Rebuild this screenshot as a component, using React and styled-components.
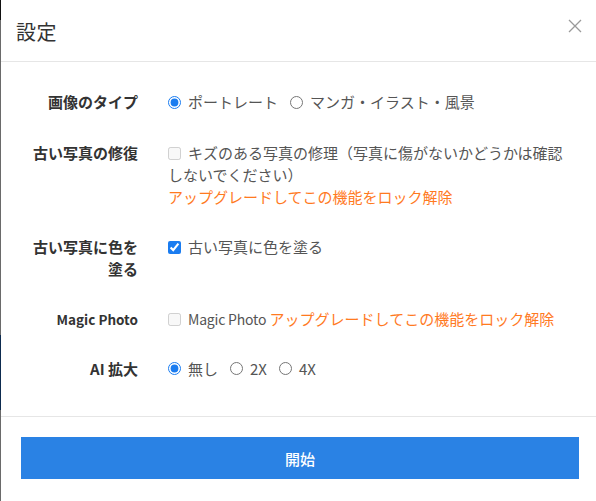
import React, { useState } from "react";
import styled, { createGlobalStyle } from "styled-components";

const GlobalStyle = createGlobalStyle`
  html, body {
    margin: 0;
    padding: 0;
    background: #ffffff;
  }
  body {
    font-family: "Noto Sans CJK JP", "Noto Sans", sans-serif;
    -webkit-font-smoothing: antialiased;
  }
  * { box-sizing: border-box; }
`;

const Screen = styled.div`
  display: flex;
  width: 596px;
  height: 501px;
  overflow: hidden;
`;

/* sliver of the dimmed page behind the dialog */
const Backdrop = styled.div`
  flex: 0 0 1px;
  background: linear-gradient(
    to bottom,
    #111 0px,
    #111 20px,
    #6a6a6a 20px,
    #6a6a6a 335px,
    #0d2b4f 335px,
    #0d2b4f 410px,
    #6a6a6a 410px
  );
`;

const Dialog = styled.section`
  flex: 1;
  display: flex;
  flex-direction: column;
  background: #fff;
`;

const Header = styled.header`
  height: 62px;
  display: flex;
  align-items: center;
  justify-content: space-between;
  padding: 0 13px 0 15px;
  border-bottom: 1px solid #e6e6e6;
`;

const Title = styled.h2`
  margin: 2px 0 0 0;
  font-size: 20px;
  font-weight: 400;
  color: #333;
  letter-spacing: 0.5px;
`;

const CloseButton = styled.button`
  width: 16px;
  height: 16px;
  padding: 0;
  border: 0;
  background: none;
  display: flex;
  align-items: center;
  justify-content: center;
  cursor: pointer;
  margin-top: -10px;
`;

const Body = styled.div`
  padding: 29px 0 8px 0;
  border-bottom: 1px solid #e6e6e6;
  flex: 0 0 auto;
`;

const FormRow = styled.div`
  display: grid;
  grid-template-columns: 137px 1fr;
  column-gap: 30px;
  margin-bottom: 28px;
  padding-right: 24px;
`;

const Label = styled.div`
  padding-left: 28px;
  text-align: right;
  font-weight: 700;
  line-height: 22px;
  color: #333;
  font-size: ${(p) => (p.$latin ? "13.5px" : "15px")};
`;

const Control = styled.div`
  font-size: 15px;
  line-height: 22px;
  color: #555;
`;

const Latin = styled.span`
  font-size: 14px;
  letter-spacing: -0.2px;
`;

const Option = styled.label`
  display: inline-flex;
  align-items: center;
  margin-right: 12px;
  cursor: pointer;
`;

const Radio = styled.input.attrs({ type: "radio" })`
  width: 13px;
  height: 13px;
  margin: 0 7px 0 0;
  accent-color: #1a7cf0;
`;

const Check = styled.input.attrs({ type: "checkbox" })`
  width: 13px;
  height: 13px;
  margin: 0 7px 0 0;
  vertical-align: -1px;
  accent-color: #1a7cf0;
`;

const Upgrade = styled.a`
  color: #ff7a1f;
  text-decoration: none;
  cursor: pointer;
  display: ${(p) => (p.$block ? "block" : "inline")};
`;

const Footer = styled.footer`
  padding: 20px 17px 22px 20px;
`;

const StartButton = styled.button`
  width: 100%;
  height: 42px;
  border: 0;
  border-radius: 0;
  background: #2a82e4;
  color: #fff;
  font-family: "Noto Sans CJK JP", "Noto Sans", sans-serif;
  font-size: 15px;
  font-weight: 500;
  cursor: pointer;
`;

const CloseIcon = () => (
  <svg width="14" height="14" viewBox="0 0 14 14" fill="none">
    <path d="M1 1 L13 13 M13 1 L1 13" stroke="#9a9a9a" strokeWidth="1.3" />
  </svg>
);

export default function App() {
  const [type, setType] = useState("portrait");
  const [colorize, setColorize] = useState(true);
  const [scale, setScale] = useState("none");

  return (
    <>
      <GlobalStyle />
      <Screen>
        <Backdrop />
        <Dialog>
          <Header>
            <Title>設定</Title>
            <CloseButton aria-label="close">
              <CloseIcon />
            </CloseButton>
          </Header>
          <Body>
            <FormRow>
              <Label>画像のタイプ</Label>
              <Control>
                <Option>
                  <Radio
                    name="type"
                    checked={type === "portrait"}
                    onChange={() => setType("portrait")}
                  />
                  ポートレート
                </Option>
                <Option>
                  <Radio
                    name="type"
                    checked={type === "art"}
                    onChange={() => setType("art")}
                  />
                  マンガ・イラスト・風景
                </Option>
              </Control>
            </FormRow>

            <FormRow>
              <Label>古い写真の修復</Label>
              <Control>
                <Check disabled />
                キズのある写真の修理（写真に傷がないかどうかは確認しないでください）
                <Upgrade $block>アップグレードしてこの機能をロック解除</Upgrade>
              </Control>
            </FormRow>

            <FormRow>
              <Label>古い写真に色を塗る</Label>
              <Control>
                <Check
                  checked={colorize}
                  onChange={(e) => setColorize(e.target.checked)}
                />
                古い写真に色を塗る
              </Control>
            </FormRow>

            <FormRow>
              <Label $latin>Magic Photo</Label>
              <Control>
                <Check disabled />
                <Latin>Magic Photo</Latin>{" "}
                <Upgrade>アップグレードしてこの機能をロック解除</Upgrade>
              </Control>
            </FormRow>

            <FormRow>
              <Label>AI 拡大</Label>
              <Control>
                <Option>
                  <Radio
                    name="scale"
                    checked={scale === "none"}
                    onChange={() => setScale("none")}
                  />
                  無し
                </Option>
                <Option>
                  <Radio
                    name="scale"
                    checked={scale === "2x"}
                    onChange={() => setScale("2x")}
                  />
                  2X
                </Option>
                <Option>
                  <Radio
                    name="scale"
                    checked={scale === "4x"}
                    onChange={() => setScale("4x")}
                  />
                  4X
                </Option>
              </Control>
            </FormRow>
          </Body>
          <Footer>
            <StartButton>開始</StartButton>
          </Footer>
        </Dialog>
      </Screen>
    </>
  );
}
